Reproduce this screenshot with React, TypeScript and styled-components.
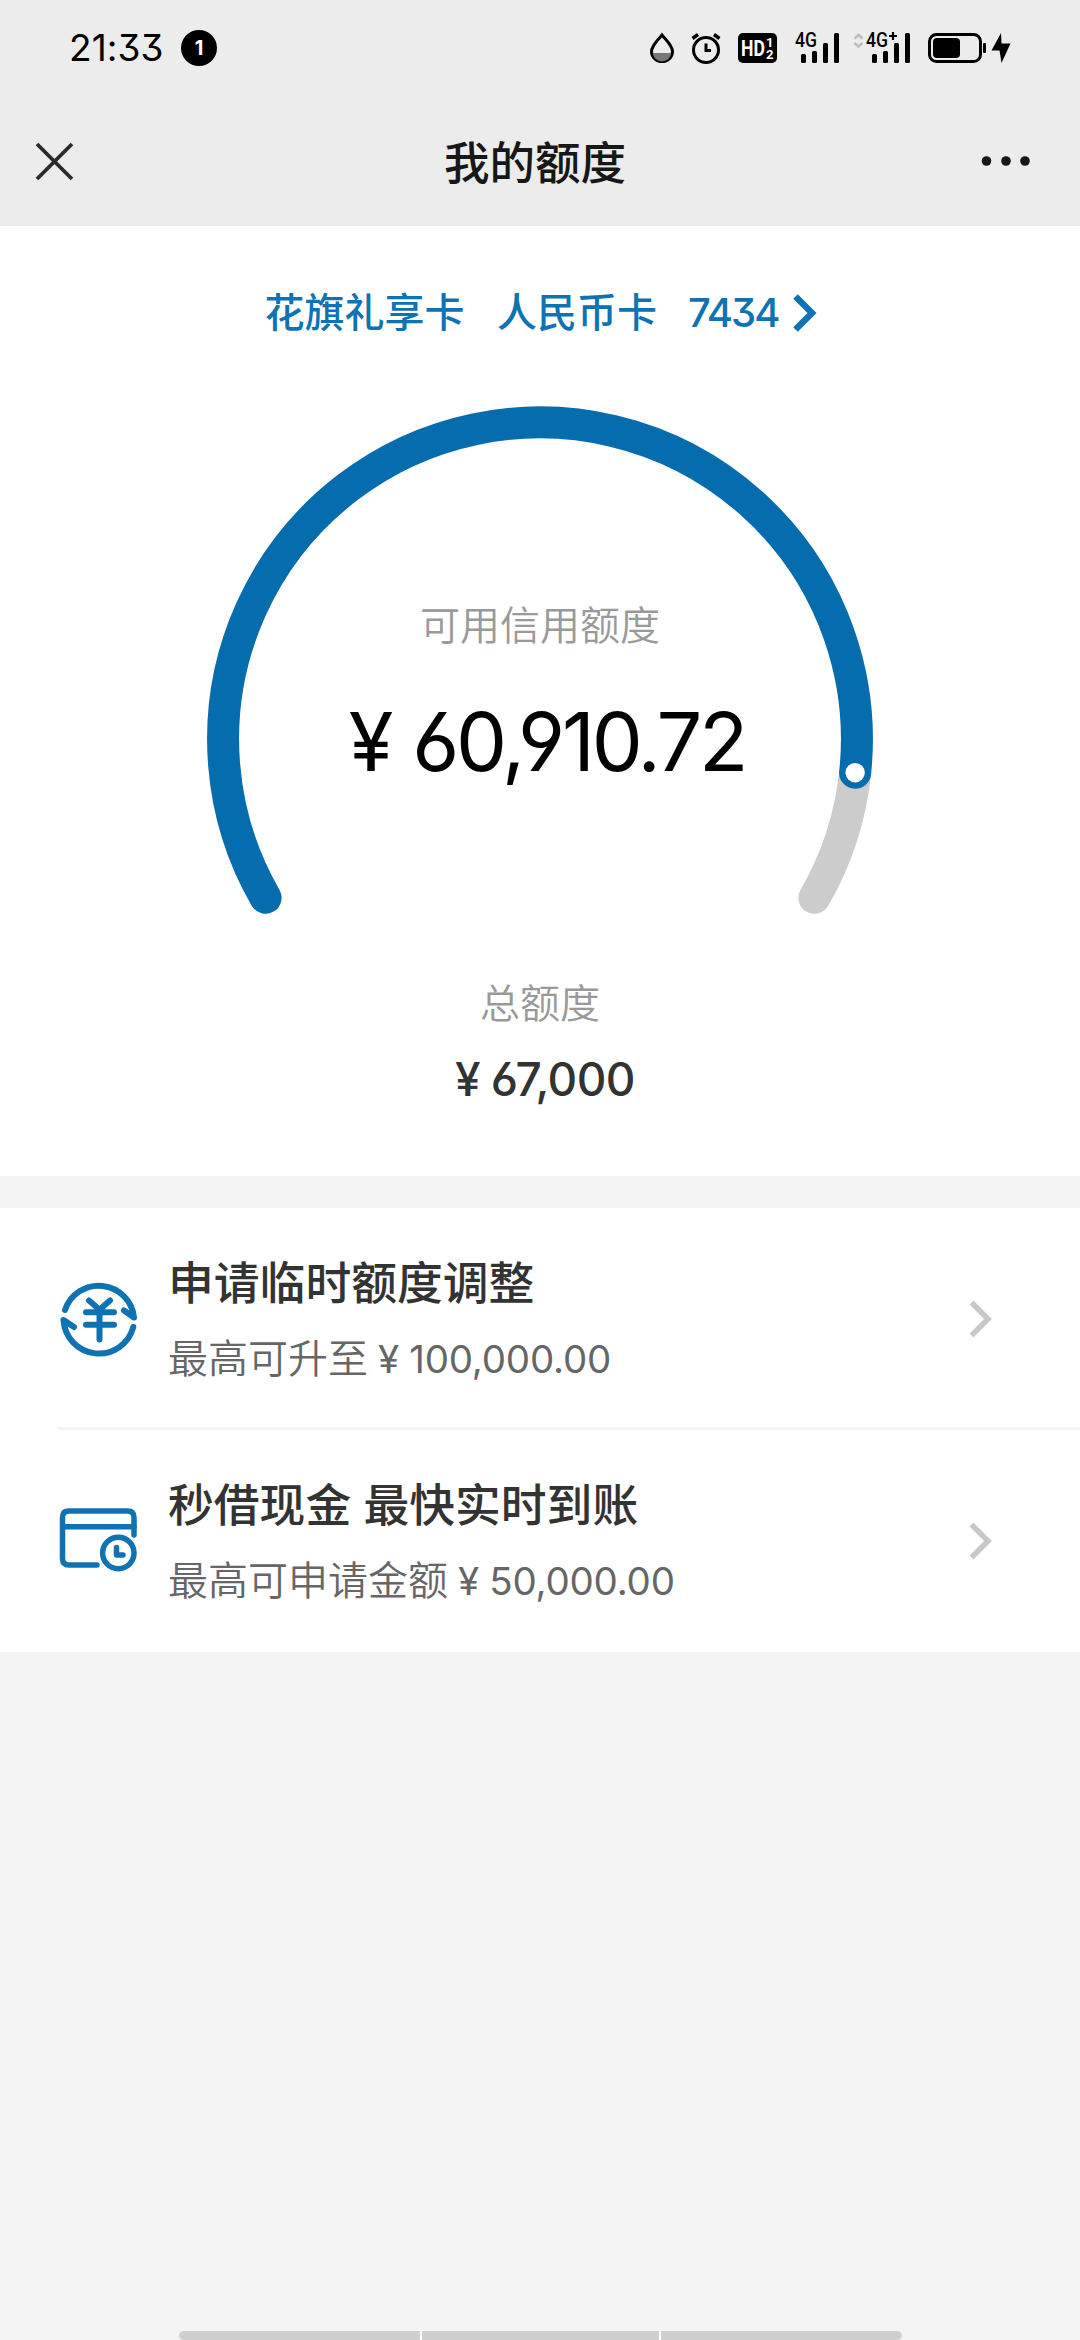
import React from 'react';
import styled, { createGlobalStyle } from 'styled-components';

const BLUE = '#056cae';
const LINK = '#0f73b3';

const Global = createGlobalStyle`
  body {
    margin: 0;
    background: #f4f4f4;
    font-family: Inter, "Noto Sans CJK SC", sans-serif;
    font-feature-settings: "cv03", "cv04", "cv09";
  }
`;

const Screen = styled.div`
  width: 1080px;
  height: 2340px;
  display: flex;
  flex-direction: column;
  overflow: hidden;
  background: #f4f4f4;
`;

const Header = styled.header`
  height: 226px;
  background: #ececec;
`;

const StatusBar = styled.div`
  height: 96px;
  box-sizing: border-box;
  padding: 0 69px 0 69px;
  display: flex;
  align-items: center;
  justify-content: space-between;
`;

const StatusGroup = styled.div`
  display: flex;
  align-items: center;
`;

const Clock = styled.span`
  width: 112px;
  font-size: 37px;
  line-height: 48px;
  font-weight: 400;
  letter-spacing: 0.1px;
  white-space: nowrap;
  color: #000;
`;

const Badge = styled.span`
  width: 36px;
  height: 36px;
  border-radius: 50%;
  background: #000;
  color: #fff;
  font-size: 20px;
  line-height: 37px;
  font-weight: 700;
  text-align: center;
`;

const NavBar = styled.div`
  height: 130px;
  box-sizing: border-box;
  padding: 0 49px 0 34px;
  display: grid;
  grid-template-columns: 56px 1fr 56px;
  align-items: center;
`;

const NavTitle = styled.h1`
  margin: 0;
  padding-top: 6px;
  padding-left: 5px;
  font-size: 45.5px;
  line-height: 60px;
  font-weight: 500;
  text-align: center;
  color: #171717;
`;

const Summary = styled.section`
  height: 950px;
  background: #fff;
  display: flex;
  flex-direction: column;
  align-items: center;
`;

const CardPicker = styled.div`
  width: 551px;
  margin-top: 59px;
  height: 56px;
  display: flex;
  align-items: center;
  color: ${LINK};
  font-size: 40px;
  line-height: 56px;
  font-weight: 500;
  white-space: nowrap;
`;

const CardPart = styled.span<{ $width: number }>`
  flex: none;
  width: ${(p) => p.$width}px;
`;

const CardDigits = styled(CardPart)`
  letter-spacing: -1.9px;
`;

const ChevronIcon = styled.svg`
  flex: none;
`;

const Gauge = styled.div`
  margin-top: 59px;
  width: 680px;
  height: 530px;
  display: grid;
`;

const GaugeArc = styled.svg`
  grid-area: 1 / 1;
`;

const GaugeText = styled.div`
  grid-area: 1 / 1;
  padding-top: 198px;
  display: flex;
  flex-direction: column;
  align-items: center;
`;

const Label = styled.div`
  font-size: 40px;
  line-height: 56px;
  font-weight: 350;
  color: #999;
`;

const Amount = styled.div<{ $size: number; $weight: number; $color: string; $spacing: number; $shift: number; $top: number }>`
  margin-top: ${(p) => p.$top}px;
  padding-left: ${(p) => p.$shift}px;
  display: flex;
  align-items: center;
  font-size: ${(p) => p.$size}px;
  line-height: 1.2;
  font-weight: ${(p) => p.$weight};
  letter-spacing: ${(p) => p.$spacing}px;
  color: ${(p) => p.$color};
  white-space: nowrap;
`;

const Yen = styled.span<{ $gap: number }>`
  margin-right: ${(p) => p.$gap}px;
  letter-spacing: 0;
`;

const TotalBlock = styled.div`
  margin-top: 46px;
  display: flex;
  flex-direction: column;
  align-items: center;
`;

const Offers = styled.section`
  margin-top: 32px;
  height: 444px;
  background: #fff;
`;

const OfferRow = styled.div<{ $divided?: boolean }>`
  box-sizing: border-box;
  height: 222px;
  margin-left: 58px;
  padding-top: ${(p) => (p.$divided ? 3 : 0)}px;
  padding-right: 84px;
  display: flex;
  align-items: center;
  border-bottom: ${(p) => (p.$divided ? '3px solid #f3f3f3' : '0')};
`;

const OfferText = styled.div`
  flex: 1;
  padding-left: 28px;
`;

const OfferTitle = styled.div`
  font-size: 45.8px;
  line-height: 64px;
  font-weight: 500;
  color: #333;
  white-space: pre;
`;

const OfferNote = styled.div`
  margin-top: 15px;
  height: 56px;
  display: flex;
  align-items: center;
  font-size: 40px;
  line-height: 56px;
  font-weight: 350;
  color: #666;
  white-space: nowrap;
`;

const NoteAmount = styled.span`
  margin-left: 10px;
  display: inline-flex;
  font-size: 38.5px;
  font-weight: 400;
  letter-spacing: -0.2px;
`;

const NavHandle = styled.div`
  margin: auto auto 0;
  width: 723px;
  height: 9px;
  display: grid;
  grid-template-columns: 241px 237px 1fr;
  gap: 2px;
  border-radius: 5px;
  background: #fff;
  overflow: hidden;
`;

const HandlePart = styled.span`
  background: #cfcfcf;
`;

const StatusIcons = () => (
  <svg width="366" height="40" viewBox="645 28 366 40" fill="none">
    <path d="M662 35 C658 40 651.500 45.500 651.500 51.500 A10.500 10 0 0 0 672.500 51.500 C672.500 45.500 666 40 662 35Z" stroke="#000" strokeWidth="3" />
    <path d="M653 53 H671 A9 8.500 0 0 1 653 53Z" fill="#777" />
    <g stroke="#000" strokeWidth="3">
      <circle cx="706" cy="50" r="12.500" />
      <path d="M706 43.500 V50.500 H711" />
      <path d="M692.500 38.500 L698 34.500 M719.500 38.500 L714 34.500" strokeWidth="3.500" />
    </g>
    <rect x="738" y="33" width="39" height="30" rx="5" fill="#000" />
    <text transform="translate(741 56) scale(0.8 1)" fontSize="22" fontWeight="700" fill="#fff" fontFamily="Roboto">HD</text>
    <text x="766" y="46.500" fontSize="13" fontWeight="700" fill="#fff" fontFamily="Roboto">1</text>
    <text x="766" y="58.500" fontSize="13" fontWeight="700" fill="#fff" fontFamily="Roboto">2</text>
    <text x="795" y="47" fontSize="20" fontWeight="500" fill="#000" fontFamily="Roboto" textLength="22" lengthAdjust="spacingAndGlyphs">4G</text>
    <text x="866" y="47" fontSize="20" fontWeight="500" fill="#000" fontFamily="Roboto" textLength="22" lengthAdjust="spacingAndGlyphs">4G</text>
    <path d="M893 32 V40 M889 36 H897" stroke="#000" strokeWidth="2.200" />
    <path d="M854.500 38.500 L858.500 35 L862.500 38.500 M854.500 43 L858.500 46.500 L862.500 43" stroke="#bdbdbd" strokeWidth="2.500" />
    <g fill="#000">
      <rect x="801" y="54" width="5" height="9" rx="1.500" />
      <rect x="812" y="51" width="5" height="12" rx="1.500" />
      <rect x="823" y="43" width="5" height="20" rx="1.500" />
      <rect x="834" y="33" width="5" height="30" rx="1.500" />
      <rect x="872" y="54" width="5" height="9" rx="1.500" />
      <rect x="883" y="51" width="5" height="12" rx="1.500" />
      <rect x="894" y="43" width="5" height="20" rx="1.500" />
      <rect x="905" y="33" width="5" height="30" rx="1.500" />
      <rect x="933" y="38" width="27" height="20" rx="4" />
      <rect x="983" y="43" width="3" height="10" rx="1" />
      <path d="M1001 33 L991.500 50.500 H999.500 L1001.500 63 L1010.500 43.500 H1001.500Z" />
    </g>
    <rect x="929.500" y="34.500" width="51" height="27" rx="7" stroke="#000" strokeWidth="3" />
  </svg>
);

const CloseIcon = () => (
  <svg width="40" height="40" viewBox="0 0 40 40">
    <path d="M3 3 L38 38 M38 3 L3 38" stroke="#2a2a2a" strokeWidth="3.800" />
  </svg>
);

const MoreIcon = () => (
  <svg width="56" height="16" viewBox="0 0 56 16" fill="#171717">
    <circle cx="11.500" cy="8" r="4.800" />
    <circle cx="31" cy="8" r="4.800" />
    <circle cx="50" cy="8" r="4.800" />
  </svg>
);

const Chevron = ({ color, width }: { color: string; width: number }) => (
  <ChevronIcon width="28" height="42" viewBox="0 0 28 42">
    <path d="M3.500 4.500 L20 21 L3.500 37.500" fill="none" stroke={color} strokeWidth={width} />
  </ChevronIcon>
);

const LimitIcon = () => (
  <svg width="82" height="82" viewBox="57.500 1279 82 82" fill="none" stroke={LINK} strokeWidth="6" strokeLinecap="round" strokeLinejoin="round">
    <path d="M64.500 1311 A35.500 35.500 0 0 1 133.500 1318.500 L123.500 1311.500" />
    <path d="M132.800 1328 A35.500 35.500 0 0 1 63 1321 L73.500 1328" />
    <path d="M88.500 1301.500 L96.500 1308.500 M109.500 1301.500 L101.500 1308.500 M85.500 1313.300 H113.500 M85.500 1325.800 H113.500 M99 1313.500 V1340.500" />
  </svg>
);

const CashIcon = () => (
  <svg width="82" height="82" viewBox="58 1500 82 82" fill="none" stroke={LINK} strokeWidth="5.500" strokeLinecap="round">
    <path d="M97 1565 H69 Q62.500 1565 62.500 1558.500 V1517.500 Q62.500 1511 69 1511 H127.500 Q134 1511 134 1517.500 V1535" />
    <path d="M63 1526.700 H134" />
    <circle cx="118.300" cy="1553" r="15.700" />
    <path d="M116.500 1547.500 V1555 H123" strokeLinejoin="round" />
  </svg>
);

const R = 316.9;
const point = (deg: number) => {
  const a = (deg * Math.PI) / 180;
  return [340 + R * Math.cos(a), 339.3 + R * Math.sin(a)] as const;
};

const CreditArc = () => {
  const [sx, sy] = point(150);
  const [ex, ey] = point(30);
  const [mx, my] = point(6.05);
  return (
    <GaugeArc width="680" height="530" viewBox="0 0 680 530" fill="none" strokeLinecap="round" strokeWidth="32">
      <path d={`M${mx} ${my} A${R} ${R} 0 0 1 ${ex} ${ey}`} stroke="#cccccc" />
      <path d={`M${sx} ${sy} A${R} ${R} 0 1 1 ${mx} ${my}`} stroke={BLUE} />
      <circle cx={mx} cy={my} r="9.700" fill="#fff" />
    </GaugeArc>
  );
};

export default function App() {
  return (
    <Screen>
      <Global />
      <Header>
        <StatusBar>
          <StatusGroup>
            <Clock>21:33</Clock>
            <Badge>1</Badge>
          </StatusGroup>
          <StatusIcons />
        </StatusBar>
        <NavBar>
          <CloseIcon />
          <NavTitle>我的额度</NavTitle>
          <MoreIcon />
        </NavBar>
      </Header>

      <Summary>
        <CardPicker>
          <CardPart $width={232.5}>花旗礼享卡</CardPart>
          <CardPart $width={191}>人民币卡</CardPart>
          <CardDigits $width={103.5}>7434</CardDigits>
          <Chevron color={LINK} width={6.5} />
        </CardPicker>
        <Gauge>
          <CreditArc />
          <GaugeText>
            <Label>可用信用额度</Label>
            <Amount $size={81} $weight={400} $color="#000" $spacing={-3.2} $shift={14} $top={40}>
              <Yen $gap={19}>¥</Yen>60,910.72
            </Amount>
          </GaugeText>
        </Gauge>
        <TotalBlock>
          <Label>总额度</Label>
          <Amount $size={46} $weight={500} $color="#333" $spacing={-0.6} $shift={10} $top={20}>
            <Yen $gap={10}>¥</Yen>67,000
          </Amount>
        </TotalBlock>
      </Summary>

      <Offers>
        <OfferRow $divided>
          <LimitIcon />
          <OfferText>
            <OfferTitle>申请临时额度调整</OfferTitle>
            <OfferNote>
              最高可升至
              <NoteAmount><Yen $gap={10}>¥</Yen>100,000.00</NoteAmount>
            </OfferNote>
          </OfferText>
          <Chevron color="#c8c8ca" width={5.5} />
        </OfferRow>
        <OfferRow>
          <CashIcon />
          <OfferText>
            <OfferTitle>秒借现金 最快实时到账</OfferTitle>
            <OfferNote>
              最高可申请金额
              <NoteAmount><Yen $gap={10}>¥</Yen>50,000.00</NoteAmount>
            </OfferNote>
          </OfferText>
          <Chevron color="#c8c8ca" width={5.5} />
        </OfferRow>
      </Offers>

      <NavHandle>
        <HandlePart />
        <HandlePart />
        <HandlePart />
      </NavHandle>
    </Screen>
  );
}
